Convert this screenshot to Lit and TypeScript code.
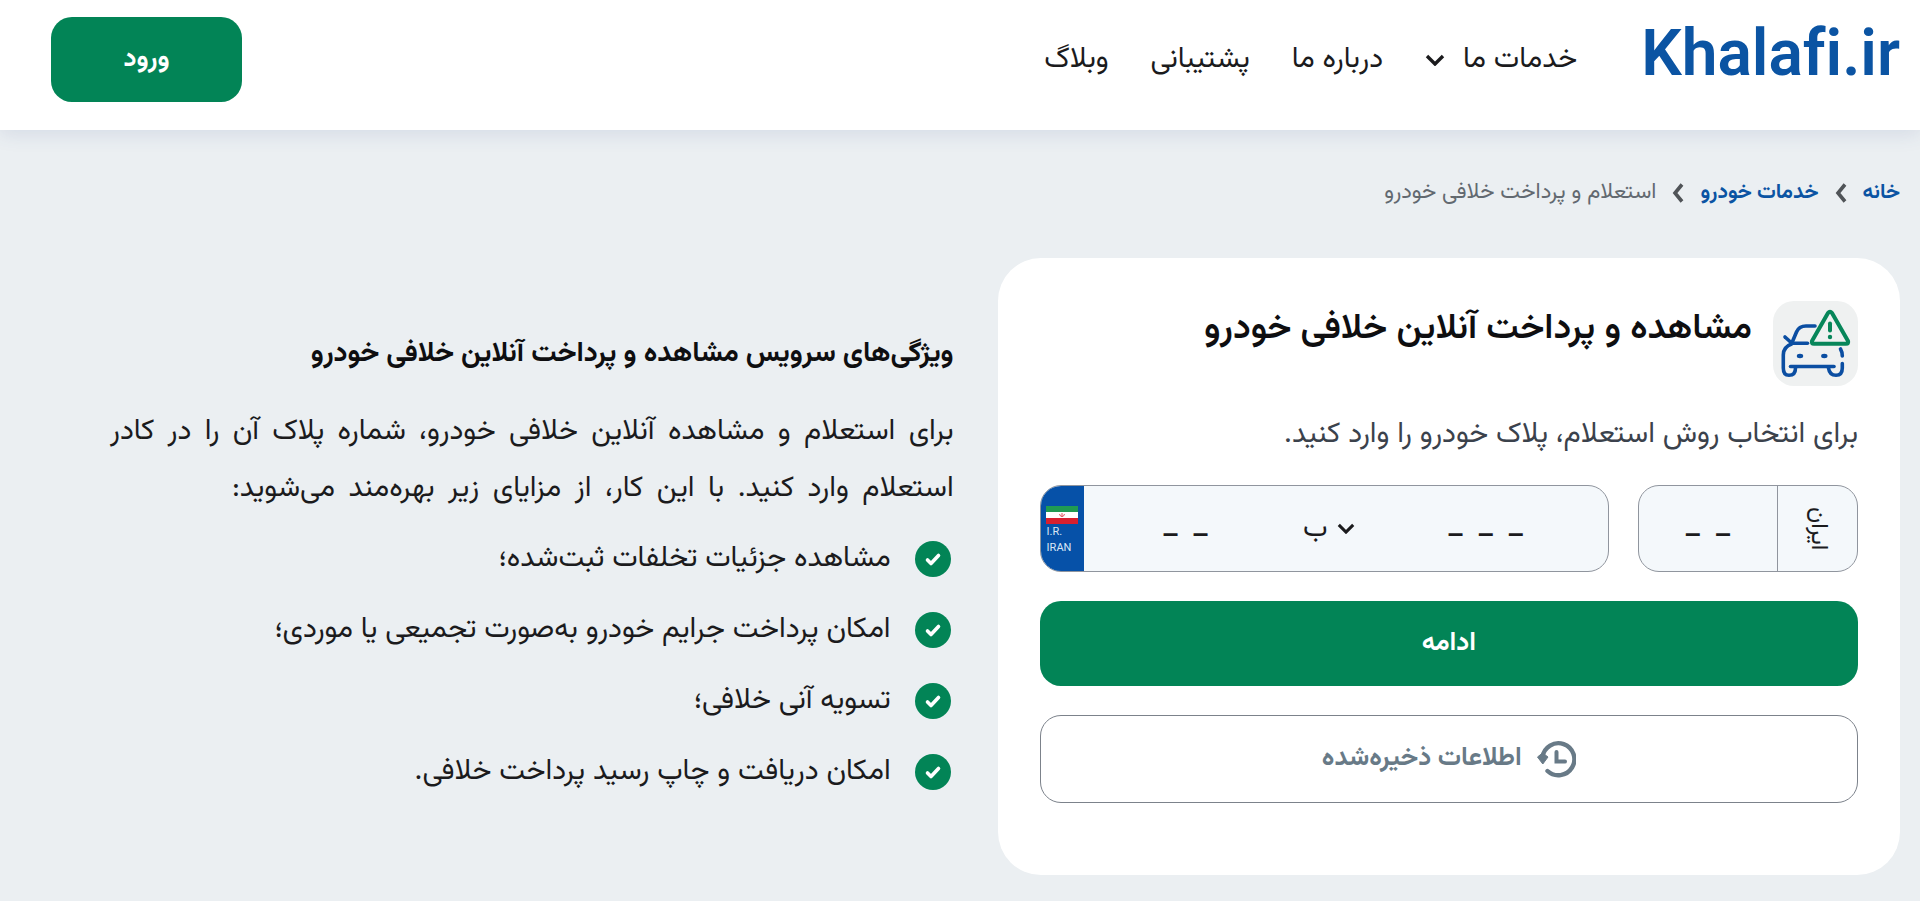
import { LitElement, html, css, svg } from "lit";
import { customElement } from "lit/decorators.js";

const letters = ["ب", "الف", "ج", "د", "س", "ص", "ط", "ق", "ل", "م", "ن", "و", "ه", "ی"];

const features = [
  "مشاهده جزئیات تخلفات ثبت‌شده؛",
  "امکان پرداخت جرایم خودرو به‌صورت تجمیعی یا موردی؛",
  "تسویه آنی خلافی؛",
  "امکان دریافت و چاپ رسید پرداخت خلافی.",
];

const twoDigits = "–\u00a0\u00a0–";
const threeDigits = "–\u00a0\u00a0–\u00a0\u00a0–";

const chevronDown = (cls: string) => html`
  <svg class=${cls} viewBox="0 0 20 12" aria-hidden="true">
    <path d="M2 2 L10 10 L18 2" fill="none" stroke="currentColor" stroke-width="3.4" />
  </svg>`;

const chevronLeft = html`
  <svg class="separator" viewBox="0 0 12 20" aria-hidden="true">
    <path d="M10 1.500 L3 10 L10 18.500" fill="none" stroke="currentColor" stroke-width="3.600" />
  </svg>`;

const carIcon = html`
  <svg class="car-icon" viewBox="0 0 85 85" fill="none" stroke-linecap="round" stroke-linejoin="round" aria-hidden="true">
    ${svg`
      <g stroke="#0b4ea2" stroke-width="3.6">
        <path d="M42 25 H33 Q26 25 23.500 31 L19.700 40" />
        <path d="M20 42.300 H34.500" />
        <path d="M12 36 L17.500 41" />
        <path d="M18.500 43 Q10.300 46 10.300 54 V67 Q10.300 74.300 16 74.300 Q22.500 74.300 22.500 67" />
        <path d="M17.500 65.500 H61" />
        <path d="M55.500 67 Q56.500 74.300 63 74.300 Q69.300 74.300 69.300 67 V62.500" />
        <path d="M67.500 48 Q69.300 51 69.300 55" />
      </g>
      <ellipse cx="27" cy="55" rx="3.200" ry="2.200" fill="#0b4ea2" />
      <ellipse cx="51.300" cy="55" rx="3.200" ry="2.200" fill="#0b4ea2" />
      <path d="M55 12 Q57 9.500 59 12 L75 40 Q76 42.800 73 42.800 H41 Q38 42.800 39 40 Z" fill="#eff1f1" stroke="#07865a" stroke-width="4" />
      <path d="M57 22.500 V29.500" stroke="#07865a" stroke-width="4" />
      <circle cx="57" cy="36" r="2.200" fill="#07865a" />`}
  </svg>`;

const historyIcon = html`
  <svg class="history-icon" viewBox="0 0 40 40" fill="none" aria-hidden="true">
    <path d="M6.500 18 A16 16 0 1 1 11.500 32" stroke="currentColor" stroke-width="4.400" stroke-linecap="round" />
    <path d="M1.500 18 L6.500 14 L12 18 L6.800 25 Z" fill="currentColor" stroke="currentColor" stroke-linejoin="round" />
    <path d="M20.500 13 V22.500 H29" stroke="currentColor" stroke-width="4" stroke-linecap="round" />
  </svg>`;

const checkIcon = html`
  <svg class="check-icon" viewBox="0 0 36 36" fill="none" aria-hidden="true">
    <circle cx="18" cy="18" r="18" fill="#028456" />
    <path d="M12.500 19 L16 22.500 L23.500 14.500" stroke="#fff" stroke-width="3.600" stroke-linecap="round" stroke-linejoin="round" />
  </svg>`;

const flag = html`
  <svg class="flag" viewBox="0 0 32 18" aria-hidden="true">
    <rect width="32" height="6" fill="#1f9a52" />
    <rect y="6" width="32" height="6" fill="#fff" />
    <rect y="12" width="32" height="6" fill="#d8202f" />
    <path d="M13.500 8 Q14 10.500 16 10.500 Q18 10.500 18.500 8 M16 7 V11" fill="none" stroke="#e0545f" stroke-width="1" />
  </svg>`;

@customElement("site-header")
export class SiteHeader extends LitElement {
  static styles = css`
    :host {
      display: block;
      position: relative;
      background: #fff;
      box-shadow: 0 4px 18px rgba(62, 84, 150, 0.13);
    }
    .bar {
      display: flex;
      align-items: center;
      padding: 17px 20px 28px 51px;
    }
    .logo {
      padding-bottom: 12px;
      color: #0b54a3;
      font-family: Roboto, "Liberation Sans", sans-serif;
      font-size: 64px;
      font-weight: 600;
      font-variant-ligatures: none;
      line-height: 72px;
      text-decoration: none;
    }
    .nav {
      display: flex;
      align-items: center;
      gap: 42px;
      margin-inline-start: 64px;
    }
    .link {
      display: flex;
      align-items: center;
      gap: 18px;
      color: #1b1b1d;
      font-size: 29px;
      line-height: 56px;
      text-decoration: none;
    }
    .chevron {
      width: 20px;
      height: 12px;
    }
    .login {
      width: 191px;
      height: 85px;
      margin-inline-start: auto;
      border: 0;
      border-radius: 21px;
      background: #028456;
      color: #fff;
      font: 700 26px/56px var(--font);
    }
  `;

  render() {
    return html`
      <header class="bar">
        <a class="logo" href="#" dir="ltr">Khalafi.ir</a>
        <nav class="nav">
          <a class="link" href="#">خدمات ما ${chevronDown("chevron")}</a>
          <a class="link" href="#">درباره ما</a>
          <a class="link" href="#">پشتیبانی</a>
          <a class="link" href="#">وبلاگ</a>
        </nav>
        <button class="login" type="button">ورود</button>
      </header>
    `;
  }
}

@customElement("plate-field")
export class PlateField extends LitElement {
  static styles = css`
    :host {
      display: flex;
      gap: 29px;
      height: 87px;
    }
    .part {
      box-sizing: border-box;
      display: flex;
      overflow: hidden;
      border: 1px solid #90959e;
      border-radius: 21px;
      background: #f4f8fb;
    }
    .region {
      width: 220px;
    }
    .number {
      flex: 1;
    }
    .country {
      display: flex;
      align-items: center;
      justify-content: center;
      width: 79px;
      border-inline-end: 1px solid #90959e;
      color: #1b1b1d;
      font-size: 24px;
      line-height: 32px;
    }
    .vertical {
      writing-mode: vertical-rl;
    }
    .digits {
      box-sizing: border-box;
      min-width: 0;
      padding: 12px 0 0;
      border: 0;
      background: none;
      color: #1b1b1d;
      font: 700 26px/56px var(--font);
      text-align: center;
      outline: none;
    }
    .digits::placeholder {
      color: #1b1b1d;
      opacity: 1;
    }
    .two {
      flex: 5;
    }
    .three {
      flex: 6;
    }
    .letter {
      position: relative;
      display: flex;
      align-items: center;
      width: 76px;
    }
    .select {
      width: 100%;
      height: 100%;
      padding: 0 36px 0 0;
      border: 0;
      appearance: none;
      background: none;
      color: #1b1b1d;
      font: 400 28px/56px var(--font);
      outline: none;
    }
    .arrow {
      position: absolute;
      inset-inline-start: 8px;
      width: 18px;
      height: 11px;
      color: #1b1b1d;
      pointer-events: none;
    }
    .badge {
      box-sizing: border-box;
      display: flex;
      flex-direction: column;
      justify-content: center;
      width: 43px;
      padding: 4px 0 0 5px;
      background: #0651a8;
      color: #dbe7f5;
      font-family: Roboto, sans-serif;
      font-size: 11px;
      line-height: 16px;
    }
    .badge-text {
      padding-left: 1px;
    }
    .flag {
      width: 32px;
      height: 18px;
    }
  `;

  render() {
    return html`
      <div class="part region">
        <label class="country" for="region"><span class="vertical">ایران</span></label>
        <input class="digits two" id="region" inputmode="numeric" maxlength="2" placeholder=${twoDigits} />
      </div>
      <div class="part number">
        <input class="digits three" inputmode="numeric" maxlength="3" aria-label="سه رقم پلاک" placeholder=${threeDigits} />
        <div class="letter">
          <select class="select" aria-label="حرف پلاک">
            ${letters.map((l) => html`<option>${l}</option>`)}
          </select>
          ${chevronDown("arrow")}
        </div>
        <input class="digits two" inputmode="numeric" maxlength="2" aria-label="دو رقم پلاک" placeholder=${twoDigits} />
        <div class="badge" dir="ltr">
          ${flag}
          <span class="badge-text">I.R.</span>
          <span class="badge-text">IRAN</span>
        </div>
      </div>
    `;
  }
}

@customElement("inquiry-card")
export class InquiryCard extends LitElement {
  static styles = css`
    :host {
      box-sizing: border-box;
      display: block;
      padding: 43px 42px 72px;
      border-radius: 43px;
      background: #fff;
    }
    .head {
      display: flex;
      align-items: flex-start;
      gap: 21px;
    }
    .car-icon {
      flex: none;
      width: 85px;
      height: 85px;
      border-radius: 21px;
      background: #eff1f1;
    }
    .title {
      margin: 0;
      color: #0e0e10;
      font-size: 36px;
      font-weight: 600;
      line-height: 56px;
    }
    .hint {
      margin: 21px 0;
      color: #3b424c;
      font-size: 29px;
      line-height: 57px;
    }
    .button {
      box-sizing: border-box;
      display: flex;
      align-items: center;
      justify-content: center;
      gap: 14px;
      width: 100%;
      margin-top: 29px;
      border-radius: 21px;
      font: 700 26px/56px var(--font);
    }
    .primary {
      height: 85px;
      border: 0;
      background: #028456;
      color: #fff;
    }
    .outline {
      height: 88px;
      border: 1px solid #7c828b;
      background: #fff;
      color: #687a87;
    }
    .history-icon {
      width: 40px;
      height: 40px;
    }
  `;

  render() {
    return html`
      <div class="head">
        ${carIcon}
        <h1 class="title">مشاهده و پرداخت آنلاین خلافی خودرو</h1>
      </div>
      <p class="hint">برای انتخاب روش استعلام، پلاک خودرو را وارد کنید.</p>
      <plate-field></plate-field>
      <button class="button primary" type="button">ادامه</button>
      <button class="button outline" type="button">${historyIcon}<span>اطلاعات ذخیره‌شده</span></button>
    `;
  }
}

@customElement("app-root")
export class AppRoot extends LitElement {
  static styles = css`
    :host {
      --font: Vazirmatn, "Noto Sans Arabic", "Noto Sans", sans-serif;
      display: block;
      min-height: 100vh;
      background: #ebeff2;
      color: #1b1b1d;
      font-family: var(--font);
    }
    .crumbs {
      display: flex;
      align-items: center;
      gap: 16px;
      padding: 43px 20px 45px;
      color: #626970;
      font-size: 22px;
      line-height: 40px;
    }
    .crumb {
      color: #0b54a3;
      font-size: 21px;
      font-weight: 700;
      text-decoration: none;
    }
    .separator {
      width: 12px;
      height: 20px;
      color: #505458;
    }
    .content {
      display: flex;
      align-items: center;
      gap: 44px;
      padding: 0 20px 26px;
    }
    .card {
      width: 48%;
    }
    .about {
      flex: 1;
      padding-inline-end: 90px;
    }
    .heading {
      margin: 0 0 22px;
      color: #0e0e10;
      font-size: 28px;
      font-weight: 700;
      line-height: 56px;
    }
    .intro {
      margin: 0 0 6px;
      font-size: 29px;
      line-height: 57px;
    }
    .line {
      display: block;
      text-align-last: justify;
    }
    .short {
      padding-inline-end: 122px;
    }
    .features {
      margin: 0;
      padding: 0 3px;
      list-style: none;
      font-size: 29px;
      line-height: 71px;
    }
    .feature {
      display: flex;
      align-items: center;
      gap: 24px;
    }
    .check-icon {
      width: 36px;
      height: 36px;
    }
  `;

  render() {
    return html`
      <div dir="rtl" lang="fa">
        <site-header></site-header>
        <nav class="crumbs" aria-label="مسیر صفحه">
          <a class="crumb" href="#">خانه</a>
          ${chevronLeft}
          <a class="crumb" href="#">خدمات خودرو</a>
          ${chevronLeft}
          <span>استعلام و پرداخت خلافی خودرو</span>
        </nav>
        <main class="content">
          <inquiry-card class="card"></inquiry-card>
          <section class="about">
            <h2 class="heading">ویژگی‌های سرویس مشاهده و پرداخت آنلاین خلافی خودرو</h2>
            <p class="intro">
              <span class="line">برای استعلام و مشاهده آنلاین خلافی خودرو، شماره پلاک آن را در کادر</span>
              <span class="line short">استعلام وارد کنید. با این کار، از مزایای زیر بهره‌مند می‌شوید:</span>
            </p>
            <ul class="features">
              ${features.map((f) => html`<li class="feature">${checkIcon}<span>${f}</span></li>`)}
            </ul>
          </section>
        </main>
      </div>
    `;
  }
}
